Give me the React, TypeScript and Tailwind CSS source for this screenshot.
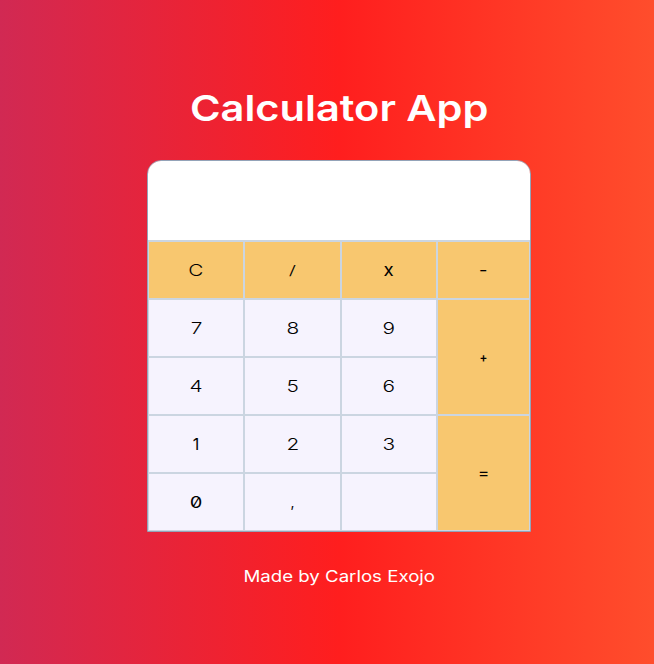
const keys = [
  { label: "C", accent: true },
  { label: "/", accent: true },
  { label: "x", accent: true },
  { label: "-", accent: true },
  { label: "7" },
  { label: "8" },
  { label: "9" },
  { label: "+", accent: true, tall: true },
  { label: "4" },
  { label: "5" },
  { label: "6" },
  { label: "1" },
  { label: "2" },
  { label: "3" },
  { label: "=", accent: true, tall: true },
  { label: "0" },
  { label: "," },
  { label: "" },
];

const glyphStyles: Record<string, string> = {
  "/": "text-[13px] scale-x-[1.6] font-light",
  x: "text-[17px] scale-x-110 font-normal",
  "-": "text-[14px] scale-x-[1.3] font-medium",
  "+": "text-[13px] scale-x-90 font-semibold",
  "=": "text-[14px] scale-x-[1.2] font-medium",
  "0": "text-[16px] scale-x-[1.25] font-normal [font-feature-settings:'zero']",
  ",": "text-[14px] font-normal",
  "1": "text-[16px] font-normal",
};

function Key({ label, accent, tall }: { label: string; accent?: boolean; tall?: boolean }) {
  return (
    <button
      className={`flex items-center justify-center border border-[#cbd5e1] text-black ${
        accent ? "bg-[#f8c76f]" : "bg-[#f6f3fe]"
      } ${tall ? "row-span-2" : ""}`}
    >
      <span
        className={`inline-block leading-6 ${
          glyphStyles[label] ?? "text-[16px] scale-x-[1.3] font-light"
        }`}
      >
        {label}
      </span>
    </button>
  );
}

export default function App() {
  return (
    <main className="flex h-screen w-full flex-col items-center bg-[linear-gradient(to_right,#d12953,#ff1e1e_339px,#ff512d_678px)] pl-6 font-['Inter',sans-serif]">
      <h1 className="mt-[88px] flex h-10 w-[297px] items-center justify-center whitespace-nowrap text-4xl font-semibold text-white">
        <span className="inline-block scale-x-[1.155]">Calculator App</span>
      </h1>
      <section className="mt-8 w-96 shrink-0 overflow-hidden rounded-t-[14px] border border-[#94a3b8]">
        <div className="h-20 border-b border-[#cbd5e1] bg-white" />
        <div className="grid grid-cols-[96px_97px_96px_93px] grid-rows-[repeat(5,58px)]">
          {keys.map((key, index) => (
            <Key key={index} {...key} />
          ))}
        </div>
      </section>
      <p className="mt-8 flex h-6 w-[191px] items-center justify-center whitespace-nowrap text-base text-white">
        <span className="inline-block scale-x-[1.165]">Made by Carlos Exojo</span>
      </p>
    </main>
  );
}
